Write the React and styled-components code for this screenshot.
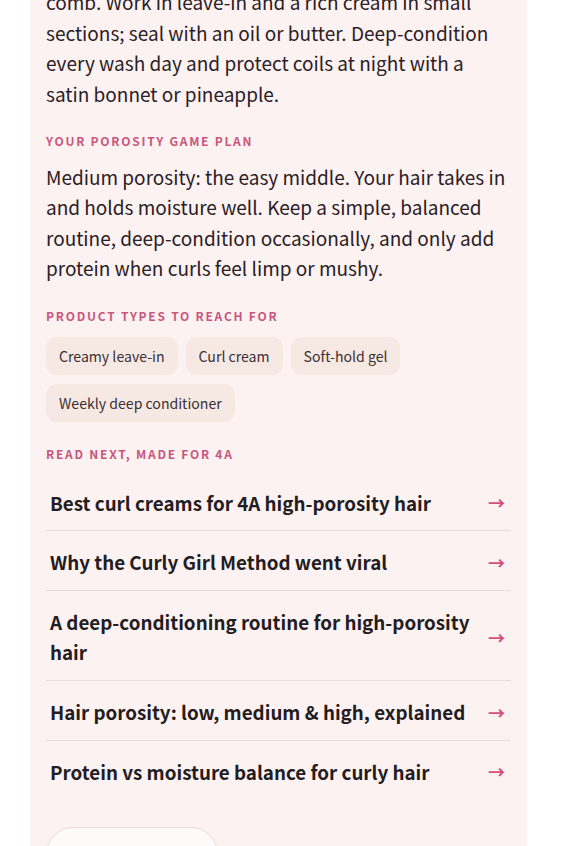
import React, { useLayoutEffect, useRef } from 'react';
import styled, { createGlobalStyle } from 'styled-components';

const GlobalStyle = createGlobalStyle`
  html { overflow-y: scroll; }
  html::-webkit-scrollbar { width: 15px; background: #ffffff; }
  html::-webkit-scrollbar-thumb {
    background: #8c8c8c;
    border-radius: 8px;
    border: 3px solid #ffffff;
    border-left-width: 4px;
  }
  body {
    margin: 0;
    background: #ffffff;
    font-family: "Noto Sans CJK KR", "Noto Sans", sans-serif;
    color: #2a2025;
  }
  * { box-sizing: border-box; }
`;

const Page = styled.main`
  width: 497px;
  margin-left: 30px;
  padding: 24px 0 48px;
  display: flex;
  flex-direction: column;
  gap: 24px;
`;

const Card = styled.section`
  background: #fcf2f1;
  border-radius: 20px;
  padding: 28px 16px 32px;
`;

const Eyebrow = styled.div`
  font-size: 12px;
  line-height: 18px;
  font-weight: 600;
  letter-spacing: 1.75px;
  text-transform: uppercase;
  color: #c9577d;
  margin-bottom: 12px;
`;

const Title = styled.h1`
  font-size: 30px;
  line-height: 38px;
  font-weight: 800;
  margin: 0 0 10px;
  color: #231c22;
`;

const Section = styled.div`
  margin-top: 23px;
`;

const Body = styled.p`
  margin: 0;
  font-size: 19px;
  line-height: 30.4px;
  color: #2a2025;
`;

const Stats = styled.div`
  display: grid;
  grid-template-columns: repeat(3, 1fr);
  gap: 10px;
  margin-top: 20px;
`;

const Stat = styled.div`
  background: #ffffff;
  border-radius: 14px;
  padding: 14px 12px;
  display: flex;
  flex-direction: column;
  gap: 4px;
`;

const StatLabel = styled.span`
  font-size: 11px;
  letter-spacing: 1px;
  text-transform: uppercase;
  color: #9a7f88;
`;

const StatValue = styled.span`
  font-size: 20px;
  font-weight: 700;
  color: #231c22;
`;

const Chips = styled.div`
  display: flex;
  flex-wrap: wrap;
  gap: 9px 8px;
  margin-top: ${p => (p.$spaced ? 14 : 0)}px;
`;

const Chip = styled.span`
  display: inline-flex;
  align-items: center;
  height: 38px;
  padding: 0 13px;
  border-radius: 11px;
  background: #f6e9e4;
  font-size: 14.1px;
  color: #3a2f33;
`;

const LinkList = styled.ul`
  list-style: none;
  margin: -3px 0 0;
  padding: 0;
`;

const LinkRow = styled.li`
  display: flex;
  align-items: center;
  justify-content: space-between;
  gap: 12px;
  padding: 16px 6px 12px 4px;
  border-bottom: ${p => (p.$last ? 'none' : '1px solid #ebdcdc')};
`;

const LinkText = styled.span`
  font-size: 18.8px;
  line-height: 30.6px;
  font-weight: 700;
  color: #231c22;
`;

const Arrow = styled.span`
  flex: none;
  font-size: 17px;
  font-weight: 700;
  color: #d4507c;
`;

const OutlineButton = styled.button`
  margin-top: 28px;
  height: 54px;
  padding: 0 28px;
  border-radius: 999px;
  border: 1px solid #ebdada;
  background: #fffafa;
  font-family: inherit;
  font-size: 15px;
  font-weight: 600;
  color: #3a2f33;
`;

const TypeCard = styled.article`
  background: #fcf2f1;
  border-radius: 20px;
  padding: 24px 16px;
`;

const TypeHead = styled.h2`
  font-size: 22px;
  font-weight: 800;
  margin: 0 0 8px;
  color: #231c22;
`;

const plan =
  'Medium porosity: the easy middle. Your hair takes in and holds moisture well. Keep a simple, balanced routine, deep-condition occasionally, and only add protein when curls feel limp or mushy.';

const products = ['Creamy leave-in', 'Curl cream', 'Soft-hold gel', 'Weekly deep conditioner'];

const reads = [
  'Best curl creams for 4A high-porosity hair',
  'Why the Curly Girl Method went viral',
  'A deep-conditioning routine for high-porosity hair',
  'Hair porosity: low, medium & high, explained',
  'Protein vs moisture balance for curly hair',
];

const types = [
  '2A', '2B', '2C', '3A', '3B', '3C', '4A', '4B', '4C',
  'Low porosity', 'Medium porosity', 'High porosity', 'Fine strands', 'Coarse strands', 'Thick density',
];

export default function App() {
  const anchor = useRef(null);

  useLayoutEffect(() => {
    if (!anchor.current) return;
    const top = anchor.current.getBoundingClientRect().top + window.scrollY;
    window.scrollTo(0, top - 132);
  }, []);

  return (
    <>
      <GlobalStyle />
      <Page>
        <Card>
          <Eyebrow>Your curl profile</Eyebrow>
          <Title>4A coils, medium porosity</Title>
          <Body>
            Tight, springy S-shaped coils with plenty of shrinkage. Here is what that means for your wash day.
          </Body>
          <Stats>
            <Stat>
              <StatLabel>Curl type</StatLabel>
              <StatValue>4A</StatValue>
            </Stat>
            <Stat>
              <StatLabel>Porosity</StatLabel>
              <StatValue>Medium</StatValue>
            </Stat>
            <Stat>
              <StatLabel>Density</StatLabel>
              <StatValue>Thick</StatValue>
            </Stat>
          </Stats>

          <Section>
            <Eyebrow>Your 4A routine</Eyebrow>
            <Body>
              Your 4A coils are springy and thirsty, so moisture comes first. Detangle only on soaking-wet hair,
              using your fingers or a wide-tooth
              <br />
              comb. Work in leave-in and a rich cream in small sections; seal with an oil or butter. Deep-condition
              every wash day and protect coils at night with a satin bonnet or pineapple.
            </Body>
          </Section>

          <Section ref={anchor}>
            <Eyebrow>Your porosity game plan</Eyebrow>
            <Body>{plan}</Body>
          </Section>

          <Section>
            <Eyebrow>Product types to reach for</Eyebrow>
            <Chips>
              {products.map(p => (
                <Chip key={p}>{p}</Chip>
              ))}
            </Chips>
          </Section>

          <Section>
            <Eyebrow>Read next, made for 4A</Eyebrow>
            <LinkList>
              {reads.map((r, i) => (
                <LinkRow key={r} $last={i === reads.length - 1}>
                  <LinkText>{r}</LinkText>
                  <Arrow>→</Arrow>
                </LinkRow>
              ))}
            </LinkList>
          </Section>

          <OutlineButton>Retake the quiz</OutlineButton>
        </Card>

        {types.map(t => (
          <TypeCard key={t}>
            <Eyebrow>Curl guide</Eyebrow>
            <TypeHead>{t}</TypeHead>
            <Body>
              A quick look at how {t} hair behaves, what it needs on wash day, and the styling habits that help it
              hold shape, shine and definition for longer between washes. Keep routines gentle and consistent.
            </Body>
            <Chips $spaced>
              <Chip>Wash day</Chip>
              <Chip>Styling</Chip>
              <Chip>Night care</Chip>
            </Chips>
          </TypeCard>
        ))}
      </Page>
    </>
  );
}
